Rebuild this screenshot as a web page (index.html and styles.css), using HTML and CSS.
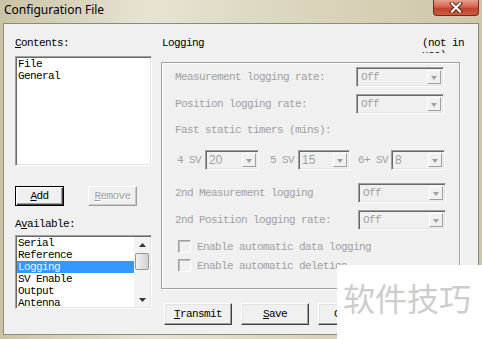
FILE: index.html
```html
<!DOCTYPE html>
<html lang="en">
<head>
    <meta charset="UTF-8">
    <title>Configuration File</title>
    <link rel="stylesheet" href="styles.css">
</head>
<body>
    <div class="window">
        <div class="titlebar">
            <span class="title">Configuration File</span>
            <div class="close">
                <svg width="14" height="11" viewBox="0 0 14 11">
                    <path d="M3 1.5 L11 9.5 M11 1.5 L3 9.5" stroke="#5a1d12" stroke-width="4" stroke-linecap="square"/>
                    <path d="M3 1.5 L11 9.5 M11 1.5 L3 9.5" stroke="#fff" stroke-width="2.2" stroke-linecap="square"/>
                </svg>
            </div>
        </div>
        <div class="dialog">
            <div class="left">
                <div class="label"><u>C</u>ontents:</div>
                <div class="listbox contents">
                    <div class="item">File</div>
                    <div class="item">General</div>
                </div>
                <div class="btnrow">
                    <button class="btn default"><u>A</u>dd</button>
                    <button class="btn disabled"><u>R</u>emove</button>
                </div>
                <div class="label avail-label">A<u>v</u>ailable:</div>
                <div class="listbox avail">
                    <div class="items">
                        <div class="item">Serial</div>
                        <div class="item">Reference</div>
                        <div class="item selected">Logging</div>
                        <div class="item">SV Enable</div>
                        <div class="item">Output</div>
                        <div class="item">Antenna</div>
                    </div>
                    <div class="scrollbar">
                        <div class="sb-arrow">
                            <svg width="7" height="4" viewBox="0 0 7 4"><path d="M3.5 0 L7 4 L0 4 Z" fill="#333"/></svg>
                        </div>
                        <div class="sb-thumb"></div>
                        <div class="sb-track"></div>
                        <div class="sb-arrow">
                            <svg width="7" height="4" viewBox="0 0 7 4"><path d="M0 0 L7 0 L3.5 4 Z" fill="#333"/></svg>
                        </div>
                    </div>
                </div>
            </div>
            <div class="right">
                <div class="head">
                    <span>Logging</span>
                    <span class="note">(not in use)</span>
                </div>
                <div class="group">
                    <div class="row">
                        <span class="row-label">Measurement logging rate:</span>
                        <div class="combo wide"><span class="value">Off</span><span class="arrow"></span></div>
                    </div>
                    <div class="row second">
                        <span class="row-label">Position logging rate:</span>
                        <div class="combo wide"><span class="value">Off</span><span class="arrow"></span></div>
                    </div>
                    <div class="caption">Fast static timers (mins):</div>
                    <div class="sv-row">
                        <span class="sv-label first">4 SV</span>
                        <div class="combo small"><span class="value num">20</span><span class="arrow"></span></div>
                        <span class="sv-label">5 SV</span>
                        <div class="combo small mid"><span class="value num">15</span><span class="arrow"></span></div>
                        <span class="sv-label six">6+ SV</span>
                        <div class="combo small"><span class="value num">8</span><span class="arrow"></span></div>
                    </div>
                    <div class="row third">
                        <span class="row-label">2nd Measurement logging</span>
                        <div class="combo wide shifted"><span class="value">Off</span><span class="arrow"></span></div>
                    </div>
                    <div class="row second">
                        <span class="row-label">2nd Position logging rate:</span>
                        <div class="combo wide shifted"><span class="value">Off</span><span class="arrow"></span></div>
                    </div>
                    <div class="check first-check"><span class="box"></span>Enable automatic data logging</div>
                    <div class="check"><span class="box"></span>Enable automatic deletion</div>
                </div>
                <div class="buttons">
                    <button class="btn big"><u>T</u>ransmit</button>
                    <button class="btn big"><u>S</u>ave</button>
                    <button class="btn big">Cancel</button>
                </div>
            </div>
        </div>
        <div class="watermark">软件技巧</div>
    </div>
</body>
</html>
```

FILE: styles.css
```css
body, html {
    margin: 0;
    padding: 0;
    width: 482px;
    height: 339px;
    overflow: hidden;
}
body {
    font-family: "Liberation Mono", "DejaVu Sans Mono", monospace;
    font-size: 11px;
    letter-spacing: -0.6px;
    line-height: 12px;
    color: #000;
}
u {
    text-decoration: underline;
    text-underline-offset: 1px;
}
.window {
    position: relative;
    width: 482px;
    height: 339px;
    overflow: hidden;
    background: linear-gradient(to right, #cac3a6 0%, #e7e3d3 30%, #dcd6be 60%, #cdc6a8 100%);
}
.titlebar {
    height: 23px;
    display: flex;
    align-items: flex-start;
    padding: 0 3px 0 4px;
    box-sizing: border-box;
}
.title {
    font-family: "Noto Sans", sans-serif;
    font-size: 12px;
    letter-spacing: 0;
    line-height: 16px;
    margin-top: 2px;
}
.close {
    margin-left: auto;
    width: 46px;
    height: 16px;
    box-sizing: border-box;
    border: 1px solid #6e2d20;
    border-top: none;
    border-radius: 0 0 4px 4px;
    background: linear-gradient(#e8a08c, #d4664d 45%, #c1432b 55%, #cf5a3f);
    display: flex;
    align-items: center;
    justify-content: center;
}
.dialog {
    margin: 0 3px;
    height: 312px;
    box-sizing: border-box;
    border: 1px solid #8f8b7a;
    background: #f0f0f0;
    display: flex;
    padding: 13px 0 0 11px;
}

/* left column */
.left {
    width: 137px;
    display: flex;
    flex-direction: column;
}
.listbox {
    box-sizing: border-box;
    background: #fff;
    border: 1px solid;
    border-color: #a0a0a0 #fff #fff #a0a0a0;
    box-shadow: inset 1px 1px #696969, inset -1px -1px #e3e3e3;
    padding: 1px;
}
.contents {
    height: 110px;
    margin-top: 7px;
}
.item {
    height: 12px;
    padding-left: 1px;
    white-space: nowrap;
}
.item.selected {
    background: #3399ff;
    color: #e8f4ff;
}
.btnrow {
    display: flex;
    gap: 24px;
    margin-top: 20px;
}
.btn {
    font-family: "Liberation Mono", monospace;
    font-size: 11px;
    letter-spacing: -0.6px;
    width: 49px;
    height: 20px;
    padding: 0;
    box-sizing: border-box;
    background: #f0f0f0;
    color: #000;
    border: 1px solid;
    border-color: #fff #404040 #404040 #fff;
    box-shadow: inset -1px -1px #a0a0a0, inset 1px 1px #e3e3e3;
}
.btn.default {
    border: 1px solid #000;
    box-shadow: inset 1px 1px #fff, inset -1px -1px #404040, inset -2px -2px #a0a0a0;
}
.btn.disabled {
    color: #a0a0a0;
    text-shadow: 1px 1px #fff;
    border-color: #fff #a0a0a0 #a0a0a0 #fff;
    box-shadow: inset -1px -1px #c8c8c8;
}
.avail-label {
    margin-top: 12px;
}
.avail {
    height: 74px;
    margin-top: 5px;
    display: flex;
    overflow: hidden;
}
.items {
    flex: 1;
}
.scrollbar {
    width: 16px;
    display: flex;
    flex-direction: column;
    background: #f3f3f3;
}
.sb-arrow {
    height: 15px;
    display: flex;
    align-items: center;
    justify-content: center;
}
.sb-thumb {
    height: 17px;
    margin: 1px 1px 0;
    box-sizing: border-box;
    border: 1px solid #979797;
    border-radius: 2px;
    background: linear-gradient(to right, #f2f2f2, #e0e0e0 50%, #d2d2d2);
}
.sb-track {
    flex: 1;
}

/* right column */
.right {
    width: 299px;
    margin-left: 9px;
    display: flex;
    flex-direction: column;
}
.head {
    height: 25px;
    display: flex;
    justify-content: space-between;
    padding-left: 1px;
}
.note {
    width: 44px;
    height: 16px;
    margin-right: -6px;
    overflow: hidden;
    line-height: 12px;
}
.group {
    height: 227px;
    box-sizing: border-box;
    border: 1px solid #a0a0a0;
    box-shadow: inset 1px 1px #fff, 1px 1px #fff;
    padding: 4px 0 0 13px;
    color: #a0a0a0;
}
.row {
    height: 20px;
    display: flex;
    align-items: center;
}
.row.second {
    margin-top: 7px;
}
.row.third {
    margin-top: 13px;
}
.row-label {
    width: 181px;
}
.combo {
    height: 20px;
    box-sizing: border-box;
    border: 1px solid;
    border-color: #a0a0a0 #fff #fff #a0a0a0;
    box-shadow: inset 1px 1px #696969, inset -1px -1px #e3e3e3;
    background: #f0f0f0;
    display: flex;
    align-items: center;
    padding: 2px;
}
.combo.wide {
    width: 88px;
}
.combo.shifted {
    margin-left: 2px;
}
.combo.small {
    width: 54px;
}
.combo.small.mid {
    width: 52px;
}
.value {
    flex: 1;
    padding-left: 2px;
    color: #a0a0a0;
}
.value.num {
    font-family: "Liberation Sans", Arial, sans-serif;
    font-size: 12px;
    letter-spacing: 0;
    padding-left: 1px;
}
.arrow {
    width: 14px;
    height: 14px;
    box-sizing: border-box;
    border: 1px solid;
    border-color: #fff #a0a0a0 #a0a0a0 #fff;
    background: #f0f0f0;
    position: relative;
}
.arrow::after {
    content: '';
    position: absolute;
    left: 3px;
    top: 5px;
    border-left: 3.5px solid transparent;
    border-right: 3.5px solid transparent;
    border-top: 4px solid #a0a0a0;
}
.caption {
    margin-top: 10px;
    height: 12px;
}
.sv-row {
    margin-top: 14px;
    height: 20px;
    display: flex;
    align-items: center;
}
.sv-label {
    width: 24px;
    margin: 0 4px 0 11px;
}
.sv-label.first {
    margin-left: 2px;
}
.sv-label.six {
    width: 30px;
    margin: 0 3px 0 8px;
}
.check {
    margin-top: 6px;
    height: 13px;
    display: flex;
    align-items: center;
    padding-left: 3px;
}
.check.first-check {
    margin-top: 10px;
}
.box {
    width: 13px;
    height: 13px;
    box-sizing: border-box;
    border: 1px solid;
    border-color: #a0a0a0 #fff #fff #a0a0a0;
    box-shadow: inset 1px 1px #c0c0c0;
    background: #f0f0f0;
    margin-right: 6px;
}
.buttons {
    display: flex;
    gap: 9px;
    margin-top: 14px;
    padding-left: 3px;
}
.btn.big {
    width: 68px;
    height: 22px;
}
.watermark {
    position: absolute;
    left: 337px;
    top: 265px;
    width: 145px;
    height: 74px;
    background: #fff;
    font-family: "Noto Sans CJK SC", sans-serif;
    font-size: 32px;
    letter-spacing: 0;
    line-height: 64px;
    color: #cdcdcd;
    padding-left: 6px;
    box-sizing: border-box;
}
```
